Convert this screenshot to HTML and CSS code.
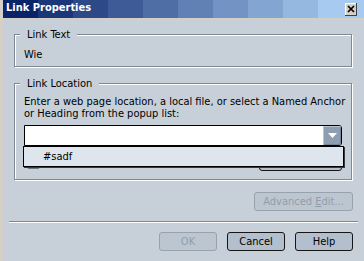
FILE: index.html
```html
<!DOCTYPE html>
<html>
<head>
<meta charset="utf-8">
<title>Link Properties</title>
<link rel="stylesheet" href="styles.css">
</head>
<body>
<div class="window">
  <div class="titlebar">
    <span class="title">Link Properties</span>
    <span class="close"><svg width="8" height="8" viewBox="0 0 8 8"><path d="M1 1L7 7M7 1L1 7" stroke="#000" stroke-width="1.7" fill="none"/></svg></span>
  </div>
  <div class="content">
    <fieldset class="group group-text">
      <legend>Link Text</legend>
      <div class="line">Wie</div>
    </fieldset>
    <fieldset class="group group-loc">
      <legend>Link Location</legend>
      <div class="desc">Enter a web page location, a local file, or select a Named Anchor<br>or Heading from the popup list:</div>
      <div class="combo">
        <div class="combo-field"></div>
        <div class="combo-btn"><svg width="9" height="5" viewBox="0 0 9 5"><path d="M0 0H9L4.5 5Z" fill="#fff"/></svg></div>
        <div class="popup"><div class="item">#sadf</div></div>
      </div>
      <div class="row">
        <span class="check"></span>
        <button class="btn choose">Choose File...</button>
      </div>
    </fieldset>
    <div class="adv-row"><button class="btn disabled adv">Advanced <u>E</u>dit...</button></div>
    <div class="sep"></div>
    <div class="actions">
      <button class="btn disabled">OK</button>
      <button class="btn">Cancel</button>
      <button class="btn">Help</button>
    </div>
  </div>
</div>
</body>
</html>
```
FILE: styles.css
```css
html, body {
  margin: 0;
  padding: 0;
}
body {
  width: 364px;
  height: 261px;
  overflow: hidden;
  background: #c7d0d9;
  font-family: "DejaVu Sans Condensed", "Liberation Sans", sans-serif;
  font-size: 11px;
  color: #000;
}
.window {
  height: 261px;
  border-left: 3px solid #d4d0c8;
  background: #c7d0d9;
}
.titlebar {
  height: 18px;
  border-bottom: 1px solid #d4d0c8;
  display: flex;
  align-items: center;
  justify-content: space-between;
  background: linear-gradient(to right,
    #0a246a 0 35px, #1b3679 35px 70px, #2d4988 70px 105px, #3e5b97 105px 140px,
    #4f6ea6 140px 175px, #6180b4 175px 210px, #7293c3 210px 245px, #83a5d2 245px 280px,
    #95b8e1 280px 315px, #a6caf0 315px);
}
.title {
  padding-left: 3px;
  color: #fff;
  font-weight: bold;
  line-height: 16px;
  padding-bottom: 2px;
}
.close {
  width: 12px;
  height: 13px;
  margin-right: 7px;
  box-sizing: border-box;
  background: #d4d0c8;
  box-shadow: inset -1px -1px 0 #404040, inset 1px 1px 0 #fff;
  display: flex;
  align-items: center;
  justify-content: center;
}
.content {
  padding: 0 11px;
}
.group {
  margin: 9px 1px 0 0;
  padding: 8px 9px 5px 9px;
  border: 1px solid #7f8893;
  box-shadow: inset 1px 1px 0 #fff, 1px 1px 0 #fff;
  min-width: 0;
}
.group legend {
  padding: 0 7px;
  margin-left: -4px;
  line-height: 13px;
  background: #c7d0d9;
}
.group-loc {
  margin-top: 10px;
  padding-top: 6px;
  padding-bottom: 8px;
}
.line {
  line-height: 12px;
}
.desc {
  line-height: 12px;
  white-space: nowrap;
}
.combo {
  position: relative;
  margin-top: 5px;
  height: 21px;
  box-sizing: border-box;
  border: 1px solid #000;
  border-radius: 0 3px 3px 0;
  background: #fff;
  display: flex;
}
.combo-field {
  flex: 1;
}
.combo-btn {
  width: 18px;
  background: #8e9eb1;
  border-radius: 0 2px 2px 0;
  box-shadow: inset 1px 1px 0 #b9c4d0, inset -1px -1px 0 #75859a;
  display: flex;
  align-items: center;
  justify-content: center;
}
.popup {
  position: absolute;
  top: calc(100% + 1px);
  left: -2px;
  right: -3px;
  height: 21px;
  box-sizing: border-box;
  border: 1px solid #000;
  background: #dfe5ec;
  box-shadow: 1px 1px 0 #3a3a3a;
  z-index: 2;
}
.item {
  padding-left: 19px;
  line-height: 19px;
}
.row {
  margin-top: 6px;
  height: 19px;
  display: flex;
  align-items: flex-start;
}
.check {
  width: 13px;
  height: 13px;
  box-sizing: border-box;
  margin: 4px 0 0 3px;
  border: 1px solid #6e7884;
  border-radius: 2px;
  background: #aeb8c3;
}
.btn {
  height: 19px;
  box-sizing: border-box;
  padding: 0;
  border: 1px solid #161616;
  border-radius: 3px;
  background: #b3bfcc;
  font: inherit;
  color: #000;
  line-height: 17px;
  text-align: center;
}
.btn.disabled {
  border-color: #96a2ae;
  background: #bcc6d0;
  color: #929daa;
}
.choose {
  margin-left: auto;
  width: 83px;
}
.adv-row {
  margin-top: 12px;
  display: flex;
  justify-content: flex-end;
}
.adv {
  width: 99px;
}
.sep {
  margin: 10px -5px 0 -5px;
  border-top: 1px solid #7f8893;
  border-bottom: 1px solid #fff;
}
.actions {
  margin-top: 9px;
  display: flex;
  justify-content: flex-end;
  gap: 10px;
}
.actions .btn {
  width: 58px;
}
```
